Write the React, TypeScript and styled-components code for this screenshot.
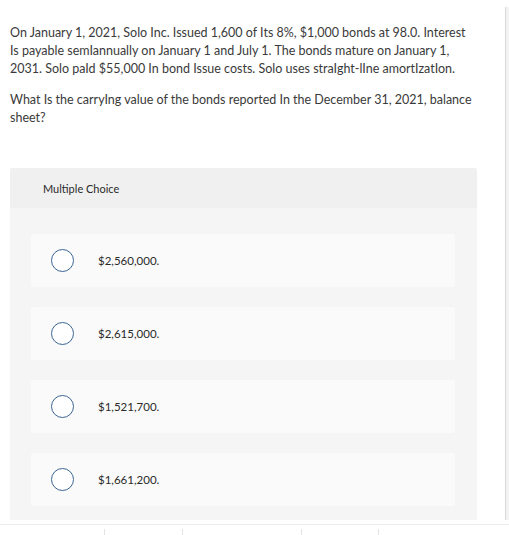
import styled, { createGlobalStyle } from 'styled-components';

type Choice = { id: string; label: string };

const choices: Choice[] = [
  { id: 'a', label: '$2,560,000.' },
  { id: 'b', label: '$2,615,000.' },
  { id: 'c', label: '$1,521,700.' },
  { id: 'd', label: '$1,661,200.' },
];

const footerCells = [105, 78, 119, 77];

export default function App() {
  return (
    <>
      <GlobalStyle />
      <Frame>
        <Main>
          <Question>
            <Paragraph>
              On January 1, 2021, Solo Inc. Issued 1,600 of Its 8%, $1,000 bonds at 98.0. Interest
              <br />
              Is payable semIannually on January 1 and July 1. The bonds mature on January 1,
              <br />
              2031. Solo paId $55,000 In bond Issue costs. Solo uses straIght-lIne amortIzatIon.
            </Paragraph>
            <Paragraph>
              What Is the carryIng value of the bonds reported In the December 31, 2021, balance
              <br />
              sheet?
            </Paragraph>
          </Question>
          <ChoiceBox>
            <ChoiceHeader>Multiple Choice</ChoiceHeader>
            <ChoiceList>
              {choices.map((choice) => (
                <ChoiceCard key={choice.id}>
                  <Radio />
                  <ChoiceLabel>{choice.label}</ChoiceLabel>
                </ChoiceCard>
              ))}
            </ChoiceList>
          </ChoiceBox>
        </Main>
        <ScrollStrip />
      </Frame>
      <Footer>
        {footerCells.map((w, i) => (
          <FooterCell key={i} style={{ width: w }} />
        ))}
      </Footer>
    </>
  );
}

const GlobalStyle = createGlobalStyle`
  body {
    margin: 0;
    background: #fff;
    font-family: Lato, 'Open Sans', Arial, sans-serif;
    color: #333;
  }
`;

const Frame = styled.div`
  display: flex;
  flex-direction: row;
  align-items: flex-start;
`;

const Main = styled.div`
  width: 505px;
  flex-shrink: 0;
`;

const ScrollStrip = styled.div`
  margin-top: 7px;
  height: 513px;
  width: 3px;
  border-left: 1px solid #d9d9d9;
  background: #f2f2f2;
`;

const Question = styled.div`
  padding: 24px 10px 0 10px;
  width: 480px;
  white-space: nowrap;
`;

const Paragraph = styled.p`
  margin: 0 0 13px 0;
  font-size: 12.5px;
  line-height: 18px;
  color: #3a3a3a;

  &:last-child {
    margin-bottom: 0;
  }
`;

const ChoiceBox = styled.div`
  margin: 41px 0 0 10px;
  width: 467px;
`;

const ChoiceHeader = styled.div`
  height: 40px;
  display: flex;
  align-items: center;
  padding-left: 33px;
  background: #f0f0f0;
  border-radius: 2px 2px 0 0;
  font-size: 11px;
  color: #2a2a2a;
`;

const ChoiceList = styled.div`
  display: flex;
  flex-direction: column;
  gap: 20px;
  padding: 26px 22px 14px 21px;
  background: #f5f5f5;
`;

const ChoiceCard = styled.div`
  height: 53px;
  display: flex;
  align-items: center;
  padding-left: 20px;
  background: #fafafa;
  border-radius: 2px;
`;

const Radio = styled.span`
  box-sizing: border-box;
  width: 23px;
  height: 23px;
  border-radius: 50%;
  border: 1.5px solid #3a6593;
  background: #fff;
  flex-shrink: 0;
`;

const ChoiceLabel = styled.span`
  margin-left: 24px;
  font-size: 11.5px;
  color: #2a2a2a;
`;

const Footer = styled.div`
  margin-top: 4px;
  border-top: 1px solid #ececec;
  display: flex;
  padding-top: 4px;
`;

const FooterCell = styled.div`
  height: 10px;
  border-right: 1px solid #e3e3e3;
  box-sizing: border-box;
`;
